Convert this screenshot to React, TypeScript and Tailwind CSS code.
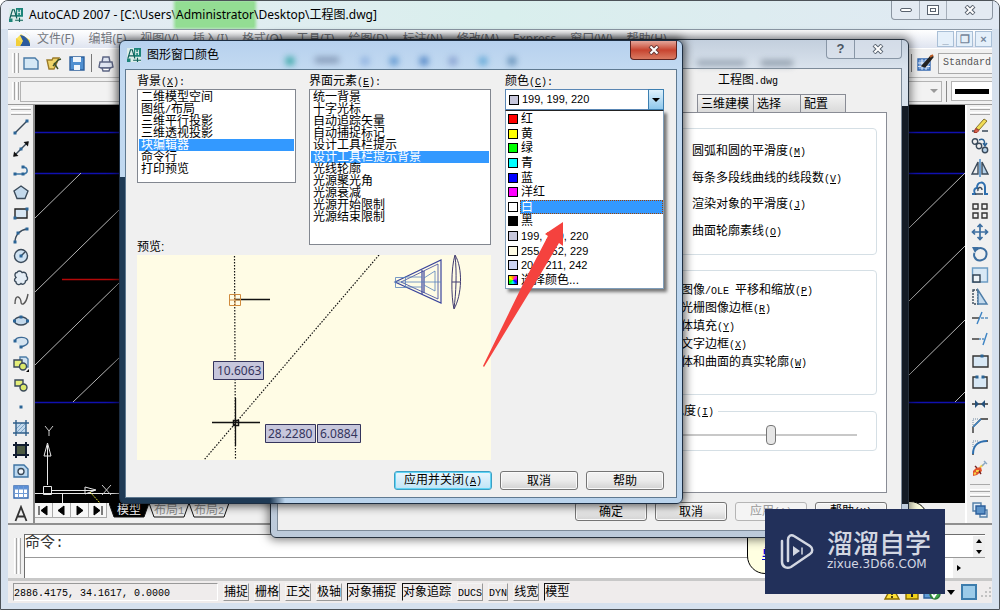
import type { ReactNode } from "react";

const MENU = ["文件(F)", "编辑(E)", "视图(V)", "插入(I)", "格式(O)", "工具(T)", "绘图(D)", "标注(N)", "修改(M)", "Express", "窗口(W)", "帮助(H)"];

const CONTEXTS = ["二维模型空间", "图纸/布局", "三维平行投影", "三维透视投影", "块编辑器", "命令行", "打印预览"];

const ELEMENTS = [
  "统一背景",
  "十字光标",
  "自动追踪矢量",
  "自动捕捉标记",
  "设计工具栏提示",
  "设计工具栏提示背景",
  "光线轮廓",
  "光源聚光角",
  "光源衰减",
  "光源开始限制",
  "光源结束限制",
];

const COLORS = [
  { name: "红", swatch: "bg-[#ff0000]" },
  { name: "黄", swatch: "bg-[#ffff00]" },
  { name: "绿", swatch: "bg-[#00ff00]" },
  { name: "青", swatch: "bg-[#00ffff]" },
  { name: "蓝", swatch: "bg-[#0000ff]" },
  { name: "洋红", swatch: "bg-[#ff00ff]" },
  { name: "白", swatch: "bg-white", active: true },
  { name: "黑", swatch: "bg-black" },
  { name: "199, 199, 220", swatch: "bg-[#c7c7dc]" },
  { name: "255, 252, 229", swatch: "bg-[#fffce5]" },
  { name: "204, 211, 242", swatch: "bg-[#ccd3f2]" },
  { name: "选择颜色...", swatch: "bg-[conic-gradient(#f80,#f0f,#00f,#0ff,#0f0,#ff0,#f80)]" },
];

const STATUS = [
  { name: "捕捉" },
  { name: "栅格" },
  { name: "正交" },
  { name: "极轴" },
  { name: "对象捕捉", on: true },
  { name: "对象追踪", on: true },
  { name: "DUCS" },
  { name: "DYN" },
  { name: "线宽" },
  { name: "模型", on: true },
];

function Icon({ children }: { children: ReactNode }) {
  return (
    <svg viewBox="0 0 18 18" className="size-[18px]" fill="none" stroke="#3a4a5a" strokeWidth="1.4">
      {children}
    </svg>
  );
}

function Dot({ x, y }: { x: number; y: number }) {
  return <rect x={x - 1.5} y={y - 1.5} width="3" height="3" fill="#2a6496" stroke="none" />;
}

const CLOUD = "M5 3.500c1-2 4-2 5 0c3-1 5 1 4.500 3.500c2 2 1 4.500-1 5c0 3-3 4-4.500 2.500c-2 2-5 1-5-1.500c-2-1-2-3 0-4.500c-2-2-1-5 1-5z";

const DRAW_TOOLS: { name: string; icon: ReactNode }[] = [
  { name: "直线", icon: <><path d="M3 15L15 3" /><Dot x={3} y={15} /><Dot x={15} y={3} /></> },
  { name: "构造线", icon: <><path d="M2 16L16 2" /><path d="M2 16l.5-3 2.500 2.500zM16 2l-.5 3L13 2.500z" fill="#111" stroke="#111" /><Dot x={9} y={9} /></> },
  { name: "多段线", icon: <><path d="M2 13h9c6 0 5-7 0-7" stroke="#3c75a5" strokeWidth="1.6" /><Dot x={3} y={13} /><Dot x={11} y={6} /><Dot x={11} y={13} /></> },
  { name: "正多边形", icon: <path d="M9 3l7 5-3 7.500H5L2 8z" fill="#c3d9ec" /> },
  { name: "矩形", icon: <><path d="M3 5h12v9H3z" fill="#d7e6f3" stroke="#222" /><Dot x={3} y={14} /><Dot x={15} y={5} /></> },
  { name: "圆弧", icon: <><path d="M3 16C3 9 8 4 15 3" /><Dot x={3} y={16} /><Dot x={6} y={7} /><Dot x={15} y={3} /></> },
  { name: "圆", icon: <><circle cx="9" cy="9" r="6.500" fill="#cfe2f2" /><path d="M9 9l4-4" /><Dot x={9} y={9} /></> },
  { name: "修订云线", icon: <path d={CLOUD} fill="#e4edf5" /> },
  { name: "样条曲线", icon: <path d="M3 14c0-12 6-6 6-2s5 3 7-8" stroke="#555" /> },
  { name: "椭圆", icon: <><ellipse cx="9" cy="9" rx="6.500" ry="4" fill="#c3d9ec" /><Dot x={2.5} y={9} /><Dot x={9} y={5} /><Dot x={15.5} y={9} /></> },
  { name: "椭圆弧", icon: <><path d="M3 8c1-5 13-5 13 1c0 3-4 4-7 5" stroke="#3c6a95" fill="#d5e4f0" /><Dot x={3} y={8} /><Dot x={9} y={14} /></> },
  { name: "插入块", icon: <><path d="M8 2h6l2 2v8H8z" fill="#cfe2f2" stroke="#4d7da8" /><path d="M2 5h8v7H2z" fill="#e5ef7a" /><circle cx="11" cy="11.500" r="3.500" fill="#dbe96b" /><path d="M17 17h-3l3-3z" fill="#000" stroke="none" /></> },
  { name: "创建块", icon: <><path d="M3 4h8v6H3z" fill="#e5ef7a" /><circle cx="11.500" cy="11.500" r="3.500" fill="#dbe96b" /></> },
  { name: "点", icon: <Dot x={9} y={9} /> },
  { name: "图案填充", icon: <><path d="M4 4h10v10H4z" fill="#c3d9ec" stroke="none" /><path d="M4 10l6-6M4 14L14 4M8 14l6-6" stroke="#7ba4c8" strokeWidth="1" /><path d="M4 1v16M14 1v16M1 4h16M1 14h16" stroke="#2f5f8a" /></> },
  { name: "渐变色", icon: <><path d="M4 4h10v10H4z" fill="#4c5a42" stroke="none" /><path d="M4 1v16M14 1v16M1 4h16M1 14h16" stroke="#111d30" strokeWidth="2" /></> },
  { name: "面域", icon: <><path d="M2 3h10l4 4v8H2z" fill="#bcd9f0" stroke="#3f74a3" /><circle cx="9" cy="9.500" r="3" fill="#eef4f9" /></> },
  { name: "表格", icon: <><path d="M2 3h14v12H2z" fill="#fff" stroke="#3468b0" /><path d="M2 3h14v3H2z" fill="#5b8fd6" stroke="none" /><path d="M2 6h14M2 10.500h14M6.500 3v12M11.500 3v12" stroke="#6f9bd6" strokeWidth="1" /></> },
  { name: "多行文字", icon: <path d="M3.500 16L9 2l5.500 14M5.500 11.500h7" stroke="#333" strokeWidth="1.800" /> },
];

const MODIFY_TOOLS: { name: string; icon: ReactNode }[] = [
  { name: "删除", icon: <><path d="M1 15h5M11 15h6" /><path d="M5 12L13 3l3 2-8 9z" fill="#f1dc55" stroke="#87752a" strokeWidth="1" /><path d="M4.500 12.500l3.500 2-2 2H3z" fill="#d9634f" stroke="#a03a2a" strokeWidth="1" /></> },
  { name: "复制", icon: <><circle cx="4" cy="4.500" r="2.700" /><circle cx="8" cy="9" r="2.700" /><circle cx="14" cy="13" r="2.700" fill="#b6d2ea" /><path d="M8 3c4-2 6 0 6 5M12 6l2 3 2-3" stroke="#2d6395" /></> },
  { name: "镜像", icon: <><path d="M7 3v12H1z" fill="#eee" /><path d="M11 3v12h6z" fill="#b6d2ea" /><path d="M9 0v18" stroke="#3c83c4" /></> },
  { name: "偏移", icon: <><path d="M1 14h3c-2-4 0-6 2-6c0-7 8-7 8-1v7h3" stroke="#2f6fae" strokeWidth="2" /><path d="M4 14h8M7 11c-1-4 4-5 4-1" /></> },
  { name: "阵列", icon: <path d="M2 2h5v5H2zM11 2h5v5h-5zM2 11h5v5H2zM11 11h5v5h-5z" stroke="#333" /> },
  { name: "移动", icon: <path d="M9 1v16M1 9h16M6.500 4L9 1.500 11.500 4M6.500 14L9 16.500l2.500-2.500M4 6.500L1.500 9 4 11.500M14 6.500L16.500 9 14 11.500" stroke="#3c6ea0" strokeWidth="1.700" /> },
  { name: "旋转", icon: <><path d="M5 5c4-4 11-1 10.500 4.500C15 16 6 17.500 3.500 12c-.8-2-.5-3 0-4" stroke="#3c6ea0" strokeWidth="2" /><path d="M1 2l7 0-4 6z" fill="#3c6ea0" stroke="none" /></> },
  { name: "缩放", icon: <><path d="M1.500 2h15v14h-15z" fill="#d8e8f5" stroke="#6c9cc4" /><path d="M2 9h7v7H2z" fill="#eef4f9" stroke="#345" /></> },
  { name: "拉伸", icon: <><path d="M2 2h5v14H2z" strokeDasharray="2 1" /><path d="M7 2l9 14H7z" fill="#c3d9ec" stroke="#4d7da8" /></> },
  { name: "修剪", icon: <><path d="M1 9h7" stroke="#333" /><path d="M10 9h8" stroke="#5a90c0" strokeDasharray="3 1" /><path d="M6 15l5-12" stroke="#3c83c4" /></> },
  { name: "延伸", icon: <><path d="M1 9h7" stroke="#333" /><path d="M8 9h5" stroke="#5a90c0" strokeDasharray="2 1" /><path d="M12 15l4-12" stroke="#3c83c4" /></> },
  { name: "打断于点", icon: <><path d="M2 4h15v11H2z" fill="#d8e8f5" stroke="#333" /><Dot x={11} y={4} /></> },
  { name: "打断", icon: <><path d="M6 4H2v11h14V4h-4" fill="#d8e8f5" stroke="#333" /><Dot x={6} y={4} /><Dot x={12} y={4} /></> },
  { name: "合并", icon: <><path d="M1 9h16" stroke="#222" /><path d="M4 5l4 4-4 4zM14 5l-4 4 4 4z" fill="#24507a" stroke="none" /></> },
  { name: "倒角", icon: <><path d="M2 17V11L10 3h7" stroke="#333" /><path d="M2 11L10 3" stroke="#3c83c4" /><path d="M2 9V3h6" stroke="#9ab" strokeDasharray="1 1" /></> },
  { name: "圆角", icon: <><path d="M2 17v-2M15 3h2" stroke="#333" /><path d="M2 16C2 8 7 3 16 3" stroke="#2f6fae" strokeWidth="2" /><path d="M2 9V3h6" stroke="#9ab" strokeDasharray="1 1" /></> },
  { name: "分解", icon: <><path d="M2 12l3-3 5-1 1 4-5 4-4 1z" fill="#e2552d" stroke="none" /><path d="M5 12h3M9 8l3-2M3 15l2-1" stroke="#f5d347" strokeWidth="2" /><path d="M11 7l4-4M13 2l3 3" stroke="#89a7c4" /><path d="M8 12l2 3M4 7l2 2" stroke="#722" /></> },
];

function ToolButton({ name, children }: { name: string; children: ReactNode }) {
  return (
    <button type="button" aria-label={name} className="flex size-[18px] items-center justify-center">
      <Icon>{children}</Icon>
    </button>
  );
}

function AppLogo() {
  return (
    <svg viewBox="0 0 16 16" className="relative size-[14px] shrink-0">
      <rect width="16" height="16" fill="#dcecea" />
      <path d="M8 0h8v10H8zM0 12h4v4H0z" fill="#1c8479" />
      <path d="M1 12L4 2h2l3 10M2 9h6M12 11v5M7 14h3M10 14h6" stroke="#0e5f58" strokeWidth="1.300" fill="none" />
      <path d="M10 2v6M13 2v6M10 5h3" stroke="#fff" fill="none" />
    </svg>
  );
}

function CloseGlyph({ stroke }: { stroke: string }) {
  return (
    <svg viewBox="0 0 12 10" className="h-[10px] w-3" fill="none">
      <path d="M2 1l8 8M10 1L2 9" stroke={stroke} strokeWidth="4" />
      <path d="M2.500 1.500l7 7M9.500 1.500l-7 7" stroke="#fff" strokeWidth="2" />
    </svg>
  );
}

function GripV() {
  return (
    <div className="flex w-2 gap-px self-stretch py-1">
      <span className="w-[3px] border-l border-white border-r border-r-[#a5a5a5]" />
      <span className="w-[3px] border-l border-white border-r border-r-[#a5a5a5]" />
    </div>
  );
}

function GripH() {
  return (
    <div className="flex h-2 w-5 flex-col justify-between">
      <span className="h-[3px] border-t border-white border-b border-b-[#a5a5a5]" />
      <span className="h-[3px] border-t border-white border-b border-b-[#a5a5a5]" />
    </div>
  );
}

// Hanzi at 12px, half-width characters on a 6px pitch, access keys underlined.
function Bitmap({ children }: { children: string }) {
  const runs = children.match(/\([A-Z]\)|[\x20-\x7e]+|[^\x20-\x7e]+/g) ?? [];
  return (
    <span className="whitespace-pre">
      {runs.map((run, i) =>
        /^[\x20-\x7e]/.test(run) ? (
          <span key={i} className="font-['Liberation_Mono',monospace] text-[10px]">
            {/^\([A-Z]\)/.test(run) ? (
              <>
                (<u>{run[1]}</u>){run.slice(3)}
              </>
            ) : (
              run
            )}
          </span>
        ) : (
          run
        ),
      )}
    </span>
  );
}

function DialogButton({ children, look, className = "" }: { children: string; look?: "default" | "disabled"; className?: string }) {
  const skin =
    look === "default"
      ? "border-[#3c9fc4] bg-linear-to-b from-[#eaf6fd] to-[#bfe4f7] shadow-[inset_0_0_0_1px_#5fd4f5]"
      : look === "disabled"
        ? "border-[#b5b5b5] bg-[#f4f4f4] text-[#9a9a9a]"
        : "border-[#757575] bg-linear-to-b from-[#f3f3f3] via-[#ebebeb] to-[#d2d2d2] shadow-[inset_0_0_0_1px_#fafafa]";
  return (
    <button type="button" className={`h-[19px] rounded-[3px] border leading-4 ${skin} ${className}`}>
      <Bitmap>{children}</Bitmap>
    </button>
  );
}

function ListBox({ id, items, selected, className }: { id: string; items: string[]; selected: string; className: string }) {
  return (
    <ul role="listbox" aria-labelledby={id} className={`border border-[#828790] bg-white p-px leading-3 ${className}`}>
      {items.map((item) => (
        <li
          key={item}
          role="option"
          aria-selected={item === selected}
          className={`h-3 pl-0.5 ${item === selected ? "bg-[#3399ff] text-white" : ""}`}
        >
          <Bitmap>{item}</Bitmap>
        </li>
      ))}
    </ul>
  );
}

function Preview() {
  return (
    <svg viewBox="0 0 354 205" className="h-[205px] w-[354px] bg-[#fffce5]" fill="none" stroke="#111">
      <path d="M97.500 1L98.500 205M242 0L67 205" strokeDasharray="1.500 1.500" strokeWidth="1.200" />
      <path d="M98 44.500h35M75 167.500h48M98.500 143v48" strokeWidth="1.300" />
      <path d="M92.500 39.500h11v11h-11zM98 39v12M92 45h12" stroke="#d08a3c" />
      <path d="M96.500 165.500h5v5h-5z" strokeWidth="1.500" />
      <g stroke="#3a449c">
        <path d="M258 27L304 5v43z" strokeWidth="1.200" />
        <path d="M264 27l37-18v35z" strokeWidth=".8" />
        <path d="M285 15v24M287 16v22" strokeWidth="1.200" />
        <path d="M258.500 22.500h10v10h-10zM268 22h17M268 32h17M287 23l11-7v20l-11-6M258 27h46" stroke="#5580bd" strokeWidth=".8" />
      </g>
      <path d="M318 0c8 13 7 40-1 54c-3-12-3-42 1-54zM315 27h8M318 1c2 16 1 38-1 52" stroke="#3f3a70" />
      <g fill="#c7c7dc" stroke="#34345c">
        <path d="M76.500 106.500h50v18h-50zM128.500 169.500h50v18h-50zM180.500 169.500h43v18h-43z" />
      </g>
      <g fill="#34345c" stroke="none" className="font-['Noto_Sans',sans-serif] text-[12px]">
        <text x="80" y="120">10.6063</text>
        <text x="131" y="183">28.2280</text>
        <text x="183" y="183">6.0884</text>
      </g>
    </svg>
  );
}

function ColorDialog() {
  return (
    <section
      aria-label="图形窗口颜色"
      className="absolute left-[118px] top-[39px] flex w-[564px] flex-col rounded-md border border-[#1d2e42] px-[5px] pb-[5px] shadow-[0_0_10px_2px_rgba(0,0,0,0.65)] [background:linear-gradient(#1f3a55,#1f3a55)_left_bottom/6px_326px_no-repeat,linear-gradient(90deg,#1f3a55_150px,transparent_165px)_left_bottom/100%_6px_no-repeat,linear-gradient(#b7d1ee,#c3daf1_30px,#b9d3ec)]"
    >
      <header className="relative flex h-[28px] items-center gap-1.5 overflow-hidden pl-[2px]">
        <div className="absolute inset-x-[150px] top-4 flex justify-around blur-[3px]">
          <span className="size-2 bg-[#35a7a5]" />
          <span className="h-1.5 w-6 bg-[#8398b5]" />
          <span className="size-2 bg-[#8fb2e0]" />
          <span className="size-2 bg-[#5e96cf]" />
          <span className="size-2 bg-[#4d83c4]" />
          <span className="size-2 bg-[#86a0cf]" />
          <span className="size-2 bg-[#5fa6d6]" />
          <span className="size-2 bg-[#628fb8]" />
        </div>
        <AppLogo />
        <h2 className="relative font-['Noto_Sans','Noto_Sans_CJK_SC',sans-serif] text-xs">图形窗口颜色</h2>
        <button
          type="button"
          aria-label="关闭"
          className="ml-auto flex h-[19px] w-[47px] items-center justify-center self-start rounded-b border border-t-0 border-[#5c2320] bg-linear-to-b from-[#e3a59a] via-[#c7432f] to-[#d97a62]"
        >
          <CloseGlyph stroke="#6b3a38" />
        </button>
      </header>
      <div className="border border-[#5f7990] bg-[#f0f0f0] px-[11px] pt-[3px] pb-[7px]">
        <div className="flex">
          <div className="mr-[13px] flex w-[159px] flex-col">
            <h3 id="context" className="h-4 leading-4">
              <Bitmap>背景(X):</Bitmap>
            </h3>
            <ListBox id="context" items={CONTEXTS} selected="块编辑器" className="h-[94px]" />
            <p className="mt-auto h-4 leading-4">预览:</p>
          </div>
          <div className="mr-[14px] w-[182px] pb-[10px]">
            <h3 id="element" className="h-4 leading-4">
              <Bitmap>界面元素(E):</Bitmap>
            </h3>
            <ListBox id="element" items={ELEMENTS} selected="设计工具栏提示背景" className="h-[156px]" />
          </div>
          <div className="relative w-[159px]">
            <label htmlFor="color" className="block h-4 leading-4">
              <Bitmap>颜色(C):</Bitmap>
            </label>
            <div className="relative flex h-[21px] items-center">
              <select
                id="color"
                className="h-full w-full appearance-none border border-[#5a87b5] bg-white pl-4 font-['Liberation_Sans',sans-serif] text-[11px]"
              >
                <option>199, 199, 220</option>
              </select>
              <span className="pointer-events-none absolute left-[4px] size-[10px] border border-black bg-[#c7c7dc]" />
              <span className="pointer-events-none absolute right-0 flex h-[21px] w-4 items-center justify-center border border-[#3c7fb1] bg-linear-to-b from-[#dff1fb] to-[#8fc8ec]">
                <svg viewBox="0 0 8 4" className="h-1 w-2">
                  <path d="M0 0h8L4 4z" />
                </svg>
              </span>
            </div>
            <ul
              role="listbox"
              aria-label="颜色"
              className="absolute inset-x-0 top-[37px] z-10 flex h-[179px] flex-col justify-between border border-[#7f9db9] border-t-[#222] bg-white py-px shadow-[3px_3px_3px_rgba(0,0,0,0.5)]"
            >
              {COLORS.map((c) => (
                <li key={c.name} role="option" aria-selected={!!c.active} className="flex h-[14px] items-center gap-0.5 pl-[2px]">
                  <span className={`size-[10px] shrink-0 border border-black ${c.swatch}`} />
                  <span
                    className={`h-[14px] flex-1 pl-px leading-[14px] ${/^\d/.test(c.name) ? "font-['Liberation_Sans',sans-serif] text-[11px]" : ""} ${c.active ? "bg-[#3399ff] text-white outline-1 -outline-offset-1 outline-dotted outline-[#a04000]" : ""}`}
                  >
                    {c.name}
                  </span>
                </li>
              ))}
            </ul>
          </div>
        </div>
        <Preview />
        <div className="mt-[11px] flex justify-end gap-2 pr-px">
          <DialogButton look="default" className="w-[98px]">应用并关闭(A)</DialogButton>
          <DialogButton className="w-[78px]">取消</DialogButton>
          <DialogButton className="w-[78px]">帮助</DialogButton>
        </div>
      </div>
      <svg viewBox="0 0 84 148" className="pointer-events-none absolute left-[362px] top-[180px] z-20 h-[148px] w-[84px]">
        <path d="M1 145L43 59L66 15L63 13L81 1L81 25L77 22L55 59L2 146z" fill="#f5423e" />
      </svg>
    </section>
  );
}

function OptionsDialog() {
  return (
    <section
      aria-label="选项"
      className="absolute left-[269px] top-[38px] flex w-[639px] flex-col rounded-md border border-[#27323e] px-[6px] pb-[6px] shadow-[0_0_10px_2px_rgba(0,0,0,0.5)] [background:linear-gradient(#141c26,#141c26)_right_66px/7px_398px_no-repeat,linear-gradient(#c3cfdd,#dbe4ee_30px,#bccada)]"
    >
      <header className="relative flex h-[28px] justify-end">
        <div className="absolute left-[420px] right-14 top-5 flex gap-4 blur-[3px]">
          <span className="h-1.5 w-12 bg-[#98a5b4]" />
          <span className="h-1.5 w-8 bg-[#8f9cab]" />
        </div>
        <div className="relative flex h-[19px] rounded-b border border-t-0 border-[#8896a6] bg-[#dde5ee]/60">
          <button type="button" aria-label="帮助" className="w-7 border-r border-[#8896a6] text-[13px] font-bold leading-4 text-[#4a5563]">
            ?
          </button>
          <button type="button" aria-label="关闭" className="flex w-[46px] items-center justify-center">
            <CloseGlyph stroke="#5b6673" />
          </button>
        </div>
      </header>
      <div className="border border-[#7d8b99] bg-[#f0f0f0] pb-[9px] pl-[8px] pr-[14px]">
        <p className="h-[25px] pl-[432px] pt-[3px] leading-4">
          <Bitmap>工程图.dwg</Bitmap>
        </p>
        <div role="tablist" className="flex h-[18px] pl-[411px]">
          {["三维建模", "选择", "配置"].map((t) => (
            <button
              key={t}
              type="button"
              role="tab"
              className="whitespace-nowrap border border-b-0 border-l-0 border-[#898c95] bg-linear-to-b from-[#f2f2f2] to-[#dadada] px-[3px] text-left leading-4 first:w-[57px] first:border-l nth-2:w-[47px] last:w-[45px]"
            >
              {t}
            </button>
          ))}
        </div>
        <div className="h-[381px] border border-[#898c95] bg-white px-[9px] pt-[15px]">
          <div className="flex h-[127px] flex-col justify-between rounded border border-[#d5dfe5] pt-[14px] pb-[13px] pl-[395px] leading-4">
            {["圆弧和圆的平滑度(M)", "每条多段线曲线的线段数(V)", "渲染对象的平滑度(J)", "曲面轮廓素线(O)"].map((t) => (
              <p key={t}>
                <Bitmap>{t}</Bitmap>
              </p>
            ))}
          </div>
          <div className="mt-[15px] h-[125px] rounded border border-[#d5dfe5] pt-2.5 pl-[384px] leading-[18px]">
            {["图像/OLE 平移和缩放(P)", "光栅图像边框(R)", "体填充(Y)", "文字边框(X)", "体和曲面的真实轮廓(W)"].map((t) => (
              <p key={t} className="h-[18px]">
                <Bitmap>{t}</Bitmap>
              </p>
            ))}
          </div>
          <fieldset className="mt-2 h-12 rounded border border-[#d5dfe5] pl-[371px]">
            <legend className="h-4 px-1 leading-4">
              <label htmlFor="fade">
                <Bitmap>色度(I)</Bitmap>
              </label>
            </legend>
            <input
              id="fade"
              type="range"
              defaultValue="55"
              className="mt-1.5 block h-5 w-[189px] appearance-none bg-transparent [&::-webkit-slider-runnable-track]:h-0.5 [&::-webkit-slider-runnable-track]:bg-[#c8c8c8] [&::-webkit-slider-thumb]:-mt-[9px] [&::-webkit-slider-thumb]:h-5 [&::-webkit-slider-thumb]:w-2.5 [&::-webkit-slider-thumb]:appearance-none [&::-webkit-slider-thumb]:rounded-sm [&::-webkit-slider-thumb]:border [&::-webkit-slider-thumb]:border-[#777] [&::-webkit-slider-thumb]:bg-[#e6e6e6]"
            />
          </fieldset>
        </div>
        <div className="mt-[9px] flex justify-end gap-2">
          <DialogButton className="w-[72px]">确定</DialogButton>
          <DialogButton className="w-[72px]">取消</DialogButton>
          <DialogButton look="disabled" className="w-[72px]">应用(A)</DialogButton>
          <DialogButton className="w-[72px]">帮助(H)</DialogButton>
        </div>
      </div>
    </section>
  );
}

function SheetTab({ children, active }: { children: string; active?: boolean }) {
  return (
    <button type="button" className={`relative h-[15px] w-10 leading-[15px] ${active ? "text-white" : "text-[#8a8a8a]"}`}>
      <svg viewBox="0 0 40 15" className="absolute inset-0 h-full w-full">
        <path d="M0 0l5 14h30l5-14" fill={active ? "#000" : "#ececec"} stroke="#111" />
      </svg>
      <span className="relative">
        <Bitmap>{children}</Bitmap>
      </span>
    </button>
  );
}

function Watermark() {
  return (
    <div className="absolute left-[764px] top-[508px] flex h-[85px] w-[180px] items-center gap-3 bg-[#22305a] pl-[14px] text-[#d3d7e2]">
      <svg viewBox="0 0 36 38" className="h-[38px] w-9" fill="none" stroke="#d3d7e2" strokeWidth="2.500" strokeLinecap="round">
        <path d="M9 28V7c0-4 3-6 6-4l16 10c3 2 3 6 0 8L12 34c-4 2-9 0-9-5V8" />
        <path d="M14 13l7 5-7 5z" fill="#d3d7e2" stroke="none" />
        <path d="M23 15v6" strokeWidth="1.500" />
      </svg>
      <div className="pb-1">
        <p className="font-['Noto_Sans_CJK_SC',sans-serif] text-[26px] font-medium leading-7">溜溜自学</p>
        <p className="font-['DejaVu_Sans',sans-serif] text-[12px] leading-4">zixue.3D66.COM</p>
      </div>
    </div>
  );
}

export default function App() {
  return (
    <div className="relative flex h-screen min-h-[610px] w-full flex-col overflow-hidden rounded-t-lg border border-[#4c5258] bg-[#d6e1ee] px-[7px] pb-[6px] font-['Liberation_Sans','Noto_Sans_CJK_SC',sans-serif] text-xs text-black">
      <header className="-mx-[7px] flex h-7 shrink-0 items-center bg-linear-to-r from-[#e6ebf4] via-[#d9efed] via-50% to-[#e1e9f3] pl-[8px]">
        <AppLogo />
        <h1 className="ml-1.5 font-['Noto_Sans','Noto_Sans_CJK_SC',sans-serif] text-xs">
          AutoCAD 2007 - [C:\Users\<span className="bg-[#93dd93] py-1 shadow-[0_0_3px_2px_#93dd93]">Administrator</span>\Desktop\工程图.dwg]
        </h1>
        <div className="ml-auto mr-[6px] flex h-[19px] self-start rounded-b border border-t-0 border-[#8b95a1] bg-[#e3eaf2]">
          <button type="button" aria-label="最小化" className="flex w-7 items-center justify-center border-r border-[#a5aeb9]">
            <span className="h-1 w-3 rounded-sm border border-[#59626e] bg-white" />
          </button>
          <button type="button" aria-label="还原" className="flex w-[27px] items-center justify-center border-r border-[#a5aeb9]">
            <span className="flex h-[10px] w-3 items-center justify-center border border-[#59626e] bg-white">
              <span className="h-1 w-1.5 border border-[#59626e]" />
            </span>
          </button>
          <button type="button" aria-label="关闭" className="flex w-[45px] items-center justify-center">
            <CloseGlyph stroke="#59626e" />
          </button>
        </div>
      </header>

      <div className="flex min-h-0 flex-1 flex-col border-t border-[#8c98a5] bg-[#f0f0f0]">
        <nav className="flex h-[18px] shrink-0 items-center bg-linear-to-b from-white to-[#dfe4f0] pl-[7px]">
          <svg viewBox="0 0 16 16" className="mr-1.5 size-4">
            <path d="M1 1h9l5 4v10H1z" fill="#f8df57" />
            <path d="M1 1h9l5 4v4L6 3 1 8z" fill="#f5f8fc" />
            <path d="M5 4c4 0 9 4 10 9v2H5l3-5z" fill="#2c5b9d" />
            <path d="M1 7l6 5-2 3H1z" fill="#f2cf3c" />
          </svg>
          <div className="flex gap-[14px] font-['Noto_Sans','Noto_Sans_CJK_SC',sans-serif] text-[#73777e]">
            {MENU.map((m) => (
              <button key={m} type="button" className="whitespace-nowrap">
                {m}
              </button>
            ))}
          </div>
          <div className="ml-auto flex gap-0.5">
            {["_", "❐", "×"].map((g) => (
              <button key={g} type="button" className="h-4 w-[17px] border border-[#a9bfd6] bg-[#e5f0fa] text-[11px] font-bold leading-3 text-[#74869b]">
                {g}
              </button>
            ))}
          </div>
        </nav>

        <div className="flex h-[29px] shrink-0 items-center border-t border-[#fff] pl-[4px]">
          <GripV />
          <div className="ml-0.5 flex items-center gap-[5px]">
            <ToolButton name="新建"><path d="M2 4h11l3 3v8H2z" fill="#d5e8f5" stroke="#4a7ba6" /></ToolButton>
            <ToolButton name="打开"><path d="M2 6h5l1-2h6L9 15H4z" fill="#f0d66a" stroke="#9c7c2a" /><path d="M9 9l4 6M8 12l5-6 3-1" stroke="#3a4f2a" /></ToolButton>
            <ToolButton name="保存"><path d="M2 3h14v13H2z" fill="#4f8fd0" stroke="#2d5f9b" /><path d="M5 3h8v5H5zM6 11h6v5H6z" fill="#eef4fa" stroke="none" /></ToolButton>
            <span className="h-[18px] w-px bg-[#777]" />
            <ToolButton name="打印"><path d="M6 3h6l1 5H5zM3 8h12l1 5-3 1H4l-2-1z" fill="#dfe5f1" stroke="#5c6584" /><path d="M5 14h8l-1 3H6z" fill="#fff" stroke="#5c6584" /></ToolButton>
          </div>
          <div className="ml-auto flex items-center gap-1">
            <span className="h-[18px] w-px bg-[#777]" />
            <ToolButton name="文字样式"><path d="M2 5h12v11H2z" fill="#7fa8e0" stroke="#3468b0" /><path d="M2 9h12M2 12.500h12M6 5v11M10 5v11" stroke="#fff" strokeWidth=".8" /><path d="M6 12L15 2l2 1-8 10z" fill="#222" stroke="#222" /><path d="M14 3l3-2" stroke="#c05a20" strokeWidth="2" /></ToolButton>
            <select aria-label="文字样式" className="h-[21px] w-[54px] appearance-none border border-r-0 border-[#a9a9a9] bg-[#f4f4f4] pl-1 font-['Liberation_Mono',monospace] text-[10px] text-[#555]">
              <option>Standard</option>
            </select>
          </div>
        </div>

        <div className="flex h-[27px] shrink-0 items-center border-t border-[#b9b9b9] pl-[4px]">
          <GripV />
          <select aria-label="图层" className="h-[21px] min-w-0 flex-1 appearance-none border border-[#b3b3b3] bg-[#f2f2f2]">
            <option />
          </select>
          <svg viewBox="0 0 8 4" className="-ml-3 mr-1 h-1 w-2">
            <path d="M0 0h8L4 4z" fill="#999" />
          </svg>
          <span className="mx-1 h-[21px] w-px bg-[#888]" />
          <span className="flex h-[20px] w-[41px] items-center justify-center border border-r-0 border-[#b3b3b3] bg-white">
            <span className="h-[5px] w-[34px] bg-black" />
          </span>
        </div>

        <div className="flex min-h-0 flex-1 border-t border-[#999]">
          <aside className="flex w-[27px] flex-col items-center justify-between border-r-2 border-r-[#8d8d8d] pt-0.5">
            <GripH />
            {DRAW_TOOLS.map((t) => (
              <ToolButton key={t.name} name={t.name}>{t.icon}</ToolButton>
            ))}
          </aside>
          <main className="flex min-w-0 flex-1 flex-col">
            <div className="flex flex-1 justify-between bg-black">
              <svg viewBox="0 0 85 398" className="h-[398px] w-[85px]" fill="none" stroke="#b4b4b4">
                <path d="M0 27.500h85M0 68.500h85M0 297.500h85" stroke="#1010b0" strokeWidth="1.500" />
                <path d="M0 113L46 68M0 187L85 104M0 260L85 177M38 297L85 252" />
                <path d="M27 174.500h58" stroke="#b40808" strokeWidth="1.500" />
                <g stroke="#e8e8e8">
                  <path d="M12.500 380v-40M9 351l3.500-13 3.500 13zM8.500 381.500h8v8h-8zM17 385.500h43M0 388.500h85M27.500 389v10M50 382l11 3-11 4z" />
                  <path d="M10 321l4 5v5M18 321l-4 5M67 380l9 10M76 380l-9 10" stroke="#ccc" />
                </g>
                <path d="M55 387l10 11" stroke="#e6e640" strokeDasharray="2 1" />
              </svg>
              <svg viewBox="0 0 58 398" className="h-[398px] w-[58px]" fill="none" stroke="#b4b4b4">
                <path d="M0 27.500h58M0 68.500h58M0 297.500h58" stroke="#1010b0" strokeWidth="1.500" />
                <path d="M2 123L58 68M2 196L58 141M2 270L58 215M48 297L58 287" />
              </svg>
            </div>
            <div className="flex h-[20px] shrink-0">
              <div className="flex h-[15px]">
                {["M3 1v9M11 1L5 5.500 11 10z", "M10 1L4 5.500 10 10z", "M5 1l6 4.500L5 10z", "M12 1v9M4 1l6 4.500L4 10z"].map((d) => (
                  <button key={d} type="button" aria-label="布局导航" className="flex w-[18px] items-center justify-center border-r border-b border-[#aaa] bg-[#f7f7f7]">
                    <svg viewBox="0 0 15 11" className="h-[11px] w-[15px]" stroke="#000">
                      <path d={d} />
                    </svg>
                  </button>
                ))}
              </div>
              <div className="ml-0.5 flex">
                <SheetTab active>模型</SheetTab>
                <SheetTab>布局1</SheetTab>
                <SheetTab>布局2</SheetTab>
              </div>
            </div>
          </main>
          <aside className="flex w-[27px] flex-col items-center border-l-2 border-l-white pt-0.5">
            <GripH />
            <div className="mt-px flex min-h-0 flex-1 flex-col items-center justify-between">
              {MODIFY_TOOLS.map((t) => (
                <ToolButton key={t.name} name={t.name}>{t.icon}</ToolButton>
              ))}
            </div>
            <div className="mt-[7px] flex h-[39px] flex-col items-center gap-1 border-t border-[#aaa] pt-1">
              <GripH />
              <ToolButton name="绘图次序">
                <path d="M2 2h8v8H2zM9 9h7v7H9z" fill="#e3eef8" stroke="#5580a8" />
                <path d="M5 5h9v8H5z" fill="#5d93c8" stroke="#2d5f9b" />
              </ToolButton>
            </div>
          </aside>
        </div>

        <div className="flex h-[55px] shrink-0 border-t-2 border-[#8f8f8f] pl-[6px] pr-[7px] pt-[9px]">
          <GripV />
          <div className="ml-0.5 flex flex-1 flex-col border-l border-t border-[#6d6d6d] bg-white">
            <div className="flex h-[23px] border-b border-[#999]">
              <p className="flex-1 font-['Liberation_Mono','Noto_Sans_CJK_SC',monospace] text-[15px] leading-[18px] text-[#333]">命令:</p>
              <div className="mt-px flex w-3 flex-col items-center justify-around bg-[#eee]">
                <svg viewBox="0 0 6 4" className="h-1 w-1.5"><path d="M0 4h6L3 0z" /></svg>
                <svg viewBox="0 0 6 4" className="h-1 w-1.5"><path d="M0 0h6L3 4z" /></svg>
              </div>
            </div>
            <div className="flex min-h-0 flex-1">
              <input aria-label="命令行" className="min-w-0 flex-1" />
              <div className="flex w-[32px] items-center bg-[#f0f0f0] pl-1">
                <svg viewBox="0 0 4 6" className="h-1.5 w-1"><path d="M0 0v6l4-3z" /></svg>
              </div>
            </div>
          </div>
        </div>

        <footer className="flex h-[25px] shrink-0 items-center gap-[5px] border-t-[3px] border-[#c8c8c8] bg-[#efecec] pl-[5px]">
          <output className="flex h-[18px] w-[205px] items-center border border-[#fff] border-l-[#999] border-t-[#999]">
            <Bitmap>2886.4175, 34.1617, 0.0000</Bitmap>
          </output>
          {STATUS.map((s) => (
            <button
              key={s.name}
              type="button"
              className={`h-[18px] border leading-4 ${s.on ? "border-[#f4f4f4] border-l-[#111] border-t-[#111]" : "border-[#f4f4f4] border-b-[#999] border-r-[#999]"}`}
            >
              <Bitmap>{s.name}</Bitmap>
            </button>
          ))}
          <div className="ml-auto flex items-center gap-0.5">
            <Icon><path d="M9 3l7 13H2z" fill="#ffe13a" stroke="#8a6d00" /><path d="M9 8v4M9 13v2" stroke="#000" /></Icon>
            <Icon><path d="M5 8V5c0-4 8-4 8 0v3" /><path d="M3 8h12v8H3z" fill="#f0d21a" stroke="#8a6d00" /><path d="M9 10v4" stroke="#222" strokeWidth="2" /></Icon>
            <Icon><path d="M1 5h8v10H1z" fill="#5e9ad4" stroke="#2d5f9b" /><circle cx="12" cy="11" r="5" fill="#3fa64a" stroke="#2b7a35" /><path d="M9 11l2 3 4-6" stroke="#fff" strokeWidth="2" /></Icon>
            <svg viewBox="0 0 8 5" className="mx-1 h-[5px] w-2"><path d="M0 0h8L4 5z" /></svg>
            <button type="button" aria-label="全屏显示" className="size-4 border-2 border-[#3d7dad] bg-[#9ccbe9]" />
            <svg viewBox="0 0 12 12" className="ml-px size-3"><path d="M9 1h2v2H9zM5 5h2v2H5zM9 5h2v2H9zM1 9h2v2H1zM5 9h2v2H5zM9 9h2v2H9z" fill="#c2c2c2" /></svg>
          </div>
        </footer>
      </div>

      <div className="absolute left-[746px] top-[500px] h-[73px] w-[181px] rounded-[18px] border border-black bg-[#ffffe1] pl-[14px] pt-[44px] leading-4">
        <a href="#" className="font-bold text-[#0000d8] underline">单</a>
      </div>
      <OptionsDialog />
      <ColorDialog />
      <Watermark />
    </div>
  );
}
